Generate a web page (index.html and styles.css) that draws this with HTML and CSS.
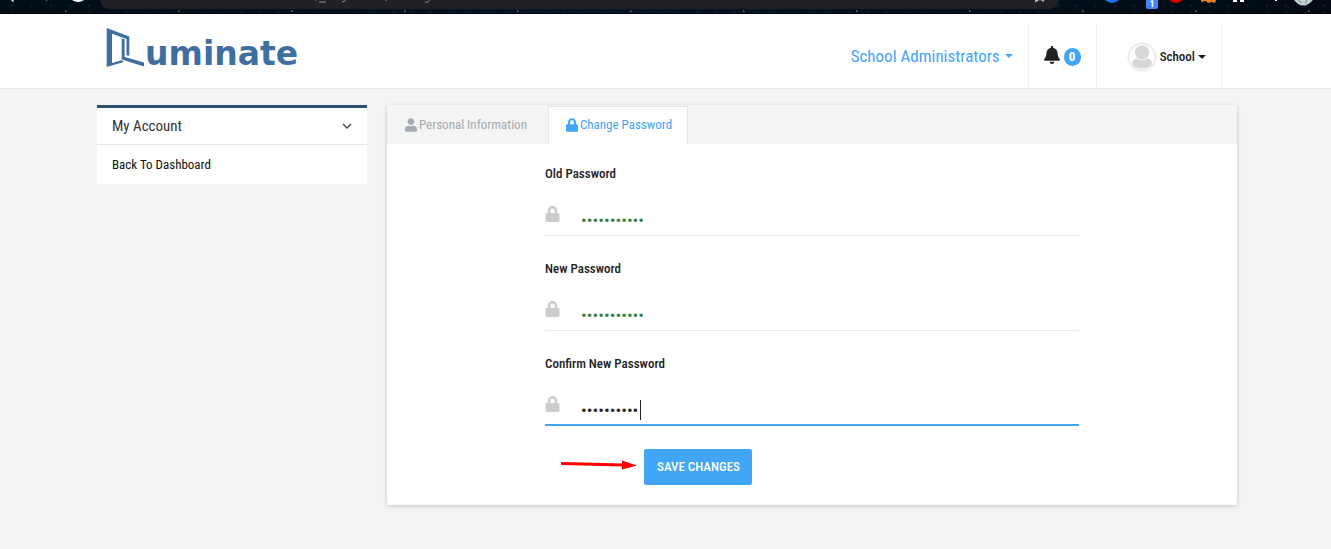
FILE: index.html
```html
<!DOCTYPE html>
<html lang="en">
<head>
<meta charset="utf-8">
<title>Change Password</title>
<meta name="viewport" content="width=device-width, initial-scale=1">
<link rel="stylesheet" href="styles.css">
</head>
<body>
<svg class="sprite" aria-hidden="true">
  <symbol id="lock" viewBox="0 0 448 512"><path d="M400 224h-24v-72C376 68.200 307.800 0 224 0S72 68.200 72 152v72H48c-26.500 0-48 21.500-48 48v192c0 26.500 21.500 48 48 48h352c26.500 0 48-21.500 48-48V272c0-26.500-21.500-48-48-48zm-104 0H152v-72c0-39.700 32.300-72 72-72s72 32.300 72 72v72z"/></symbol>
  <symbol id="user" viewBox="0 0 448 512"><path d="M224 256c70.700 0 128-57.300 128-128S294.700 0 224 0 96 57.300 96 128s57.300 128 128 128zm89.600 32h-16.700c-22.200 10.200-46.900 16-72.900 16s-50.600-5.800-72.900-16h-16.700C60.200 288 0 348.200 0 422.400V464c0 26.500 21.500 48 48 48h352c26.500 0 48-21.500 48-48v-41.600c0-74.200-60.200-134.400-134.400-134.400z"/></symbol>
  <symbol id="bell" viewBox="0 0 448 512"><path d="M224 512c35.320 0 63.970-28.650 63.970-64H160.030c0 35.350 28.650 64 63.970 64zm215.390-149.710c-19.320-20.760-55.470-51.990-55.470-154.290 0-77.700-54.480-139.900-127.940-155.160V32c0-17.670-14.320-32-31.980-32s-31.980 14.330-31.980 32v20.840C118.560 68.100 64.080 130.300 64.080 208c0 102.300-36.150 133.530-55.470 154.290-6 6.450-8.660 14.160-8.610 21.710.11 16.400 12.980 32 32.100 32h383.800c19.120 0 32-15.600 32.100-32 .05-7.550-2.610-15.270-8.610-21.710z"/></symbol>
</svg>

<div class="browser-bar" aria-hidden="true">
  <svg class="nav-icons" viewBox="0 0 110 14">
    <g fill="#fff"><path d="M11 0l2 2 1-1-1-1z"/><path d="M72 0q6 4 12 0z"/></g>
    <path d="M46 0l1 1" stroke="#778" />
  </svg>
  <div class="address">
    <svg class="address-text" viewBox="0 0 120 9"><path d="M0 1l1-2M4 2h7M27 2q3 0 4-3M71 1v-2M110 2q4 1 5-3" fill="none" stroke="#8d9298"/></svg>
    <svg class="star" viewBox="0 0 10 9"><path d="M0 2l2-3M1 1l4-2 4 2" fill="none" stroke="#bbb" stroke-width="1.500"/></svg>
  </div>
  <div class="extensions">
    <svg class="ext-icons" viewBox="0 0 231 14">
      <path d="M5 0q7 6 14 0z" fill="#1a73f5"/>
      <path d="M69 0q7 6 14 0z" fill="#d00"/>
      <path d="M101 0v2l5-1 2 2 4-1 3 1 1-3z" fill="#e8812e"/>
      <path d="M133 0v2h4V0zm7 0v2h4V0zM175 0h2v1h-2z" fill="#fff"/>
      <path d="M194 0q9 11 19 0z" fill="#c9ced2"/>
      <path d="M198 0l4 3M207 0l-2 4" stroke="#598" />
    </svg>
    <span class="ext-count">1</span>
  </div>
</div>

<header class="header">
  <a class="logo" href="#" aria-label="Luminate">
    <svg class="logo-mark" viewBox="0 0 40 40"><g fill="#3f6fa0"><path d="M1.700 0L24.300 8.500V27.700L21.500 27.200V11L7 5.700V35L16.500 32.300 19 34 1.700 39z"/><path d="M16.700 10.500L19.600 11V29L39 34.500V38.500L16.700 31.500z"/></g></svg>
    <span class="logo-text">uminate</span>
  </a>
  <nav class="top-nav">
    <button class="role" type="button">School Administrators <span class="caret"></span></button>
    <button class="alerts" type="button" aria-label="Notifications"><svg class="bell"><use href="#bell"/></svg><span class="count">0</span></button>
    <button class="profile" type="button">
      <svg class="avatar" viewBox="0 0 30 30"><circle cx="15" cy="15" r="13.500" fill="#fff" stroke="#eee" stroke-width="2.500"/><ellipse cx="15" cy="21" rx="10" ry="5.500" fill="#d6d6d6"/><circle cx="15" cy="10.500" r="7.500" fill="#d6d6d6" stroke="#fff"/></svg>
      School <span class="caret"></span>
    </button>
  </nav>
</header>

<main class="content">
  <aside class="sidebar">
    <button class="side-title" type="button">My Account
      <svg class="chevron" viewBox="0 0 10 6"><path d="M1 1l4 4 4-4" fill="none" stroke="#444" stroke-width="1.300"/></svg>
    </button>
    <a class="side-link" href="#">Back To Dashboard</a>
  </aside>
  <section class="panel">
    <nav class="tabs">
      <a class="tab" href="#"><svg class="tab-icon"><use href="#user"/></svg>Personal Information</a>
      <a class="tab active" href="#"><svg class="tab-icon"><use href="#lock"/></svg>Change Password</a>
    </nav>
    <form class="form">
      <div class="field">
        <label for="old">Old Password</label>
        <div class="entry"><svg class="lock"><use href="#lock"/></svg><input class="filled" id="old" type="password" value="password123"></div>
      </div>
      <div class="field">
        <label for="new">New Password</label>
        <div class="entry"><svg class="lock"><use href="#lock"/></svg><input class="filled" id="new" type="password" value="password456"></div>
      </div>
      <div class="field">
        <label for="confirm">Confirm New Password</label>
        <div class="entry current"><svg class="lock"><use href="#lock"/></svg><input id="confirm" type="password" value="password45"><span class="text-cursor"></span></div>
      </div>
      <div class="actions">
        <svg class="arrow" viewBox="0 0 76 10"><path d="M1 3.500L62 5" stroke="#f00" stroke-width="2.800" stroke-linecap="round"/><path d="M61 .5L76 5.500 61 9.500z" fill="#f00"/></svg>
        <button class="save" type="submit">SAVE CHANGES</button>
      </div>
    </form>
  </section>
</main>
</body>
</html>
```
FILE: styles.css
```css
* { box-sizing: border-box; }
body {
  margin: 0;
  background: #f4f4f4;
  color: #212121;
  font: 13px/20px "Roboto Condensed", "Liberation Sans Narrow", Roboto, sans-serif;
}
button { border: 0; background: none; padding: 0; font: inherit; color: inherit; }
a { color: inherit; text-decoration: none; }
.sprite { display: none; }

.browser-bar {
  display: flex;
  height: 14px;
  background:
    radial-gradient(circle, #4d5a6c 0 1px, transparent 1px) 9px 3px / 113px 17px,
    radial-gradient(circle, #142436 0 1px, transparent 1px) 3px 2px / 19px 7px,
    linear-gradient(90deg, #020d17, #041426 45%, #020b13);
  border-bottom: 1px solid #000;
  overflow: hidden;
}
.nav-icons { width: 110px; height: 14px; margin-right: -10px; flex: none; }
.address {
  display: flex;
  justify-content: space-between;
  flex: 1;
  height: 9px;
  padding: 0 14px 0 215px;
  background: #202124;
  border-radius: 0 0 16px 16px;
}
.address-text { width: 120px; height: 9px; }
.star { width: 10px; height: 9px; }
.extensions { position: relative; flex: none; width: 272px; height: 14px; }
.ext-icons { display: block; width: 231px; height: 14px; margin-left: 41px; }
.ext-count {
  position: absolute;
  left: 87px;
  top: 0;
  width: 12px;
  height: 9px;
  border-radius: 0 0 2px 2px;
  background: #4285f4;
  color: #fff;
  font-size: 9px;
  font-weight: 700;
  line-height: 9px;
  text-align: center;
}

.header {
  display: flex;
  justify-content: space-between;
  height: 75px;
  padding: 10px 109px 0 105px;
  background: #fff;
  border-bottom: 1px solid #e1e7e7;
}
.logo { display: flex; padding-top: 4px; color: #3f6fa0; }
.logo-mark { width: 40px; height: 40px; }
.logo-text { font: 700 33px/52px "DejaVu Sans", sans-serif; }
.top-nav { display: flex; }
.top-nav button { display: flex; align-items: center; border-right: 1px solid #eee; }
.caret { border: 4px solid transparent; border-top-color: currentColor; border-bottom: 0; }
.top-nav .role { gap: 5px; padding-right: 15px; color: #42a5f5; font-size: 17px; }
.alerts { justify-content: center; gap: 4px; width: 68px; }
.bell { width: 16px; height: 18px; fill: #212121; margin-bottom: 2px; }
.count {
  min-width: 17px;
  margin-top: 2px;
  border-radius: 9px;
  background: #42a5f5;
  color: #fff;
  font-weight: 700;
  line-height: 18px;
}
.top-nav .profile { gap: 3px; padding: 2px 15px 0 30px; font-weight: 500; }
.avatar { width: 30px; height: 30px; }

.content { display: flex; align-items: flex-start; gap: 20px; padding: 16px 94px 44px 97px; }
.sidebar { width: 270px; background: #fff; border-top: 3px solid #2b5070; }
.side-title {
  display: flex;
  align-items: center;
  justify-content: space-between;
  width: 100%;
  height: 37px;
  padding: 0 15px;
  border-bottom: 1px solid #e3e3e3;
  color: #333;
  font-size: 15px;
}
.chevron { width: 10px; height: 6px; }
.side-link { display: block; padding: 10px 15px 9px; color: #111; }

.panel { flex: 1; background: #fff; border-radius: 2px; box-shadow: 0 1px 4px rgba(0, 0, 0, .2); }
.tabs { display: flex; height: 39px; background: #f4f4f4; }
.tab { display: flex; align-items: center; gap: 2px; padding: 0 21px 0 18px; color: #a4abb2; }
.tab.active {
  margin-top: 1px;
  padding: 0 15px 2px 17px;
  border: 1px solid #e1e7e7;
  border-width: 1px 1px 0;
  background: #fff;
  color: #42a5f5;
}
.tab-icon { width: 12px; height: 14px; fill: currentColor; }
.form { max-width: 534px; margin: 0 auto; padding: 20px 0; }
.field { margin-bottom: 23px; }
label { display: block; font-weight: 500; }
.entry {
  position: relative;
  display: flex;
  gap: 21px;
  height: 52px;
  padding-top: 22px;
  border-bottom: 1px solid #ebebeb;
}
.entry.current { border-bottom: 2px solid #42a5f5; }
.lock { flex: none; width: 15px; height: 16px; fill: #ccc; }
input {
  flex: 1;
  height: 28px;
  min-width: 0;
  padding: 0;
  border: 0;
  outline: 0;
  background: none;
  color: #212121;
  font: inherit;
  font-size: 17px;
}
.filled { color: #388040; }
.text-cursor { position: absolute; left: 95px; top: 26px; width: 1px; height: 20px; background: #212121; }
.actions { display: flex; align-items: center; gap: 7px; padding-left: 16px; }
.arrow { width: 76px; height: 10px; margin-bottom: 4px; }
.save { height: 36px; padding: 0 12px 0 13px; border-radius: 2px; background: #42a5f5; color: #fff; font-weight: 500; }
```
